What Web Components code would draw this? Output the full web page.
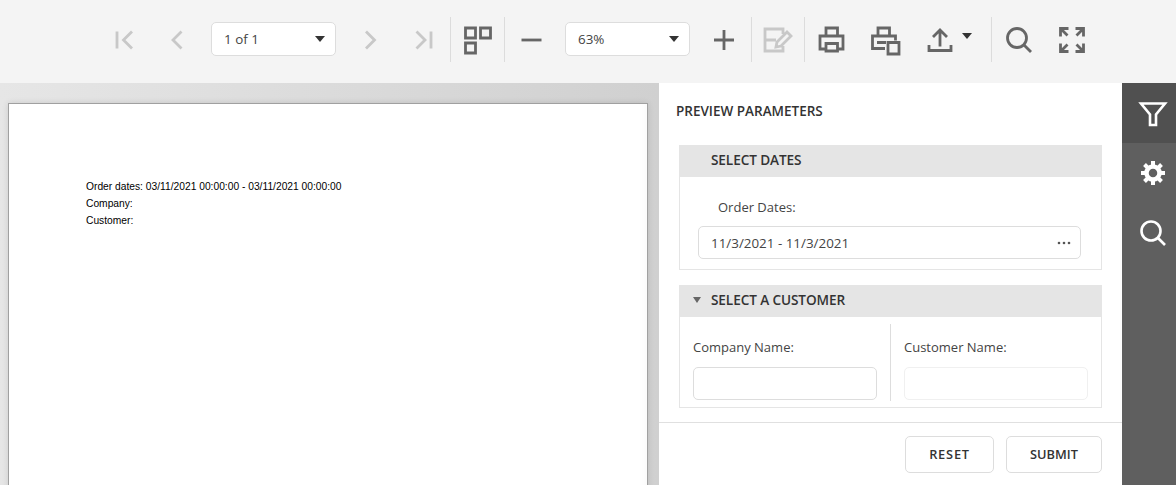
<!DOCTYPE html>
<html>
<head>
<meta charset="utf-8">
<title>Report preview</title>
<style>
  html, body { margin: 0; height: 100%; overflow: hidden; }
  body { font-family: "Open Sans", "Liberation Sans", sans-serif; color: #333; }
</style>
</head>
<body>
<report-viewer>
  <viewer-toolbar slot="toolbar"></viewer-toolbar>
  <report-page slot="page">
    <div>Order dates: 03/11/2021 00:00:00 - 03/11/2021 00:00:00</div>
    <div>Company:</div>
    <div>Customer:</div>
  </report-page>
  <params-panel slot="panel"></params-panel>
  <side-tabs slot="tabs"></side-tabs>
</report-viewer>

<script>
// shared icon paths, all on a 32 box
const ICONS = {
  first: '<path d="M9 7.500v17M24 7.500 15.500 16l8.500 8.500"/>',
  prev: '<path d="M20.500 7.500 12 16l8.500 8.500"/>',
  next: '<path d="M12 7.500 20.500 16 12 24.500"/>',
  last: '<path d="M8.500 7.500 17 16l-8.500 8.500M23 7.500v17"/>',
  multi: '<path d="M3.500 4h10v10h-10zM18.500 4h10v10h-10zM3.500 19h10v10h-10z"/>',
  minus: '<path d="M5.500 16h20"/>',
  plus: '<path d="M6 16h20M16 6v20"/>',
  edit: '<path d="M21 10V5H3v11h11M3 16v11h18v-5M15 18 25 8l4 4-10 10-5 1z"/>',
  print: '<path d="M10 11.500V4h11.500v7.500M9.500 25H4V12h23v13h-5.500M10 19.500h11.500v7.500H10z"/>',
  printPage: '<path d="M9 12V4h11.500v8M16 24.500H3.500V12h23v4.500M8 18.500h9M19 18.500h11v11.500H19z"/>',
  upload: '<path d="M16 22.500V6M9 13l7-7 7 7M5 21v5.500h22V21"/>',
  search: '<circle cx="14" cy="14" r="9.500"/><path d="M20.500 20.500 28 28"/>',
  full: '<path d="M4.500 12.500v-8h8M4.500 4.500l7 7M19.500 4.500h8v8M27.500 4.500l-7 7M4.500 19.500v8h8M4.500 27.500l7-7M27.500 19.500v8h-8M27.500 27.500l-7-7"/>',
  filter: '<path d="M4 6.500h24L19 17.500V28h-6V17.500z"/>',
  gear: '<circle cx="16" cy="16" r="6.500" stroke-width="4.500"/><path stroke-width="4" d="M16 4v4M16 24v4M4 16h4M24 16h4M7.500 7.500l3 3M21.500 21.500l3 3M24.500 7.500l-3 3M10.500 21.500l-3 3"/>'
};

const iconTemplate = document.createElement('template');
iconTemplate.innerHTML = `
  <style>
    :host { display: flex; align-items: center; justify-content: center; width: 53px; height: 54px; flex: none; }
    svg { width: 32px; height: 32px; fill: none; stroke: currentColor; stroke-width: 2.8; }
    :host([disabled]) { color: #c8c8c8; }
    :host(:not([disabled])) { color: #666; }
  </style>
  <svg viewBox="0 0 32 32"></svg>
`;

class ToolIcon extends HTMLElement {
  constructor() {
    super();
    this.attachShadow({ mode: 'open' });
    this.shadowRoot.appendChild(iconTemplate.content.cloneNode(true));
    this.shadowRoot.querySelector('svg').innerHTML = ICONS[this.getAttribute('name')];
  }
}
customElements.define('tool-icon', ToolIcon);

const comboTemplate = document.createElement('template');
comboTemplate.innerHTML = `
  <style>
    :host { display: flex; align-items: center; justify-content: space-between; box-sizing: border-box; width: 125px; height: 34px; padding: 0 10px 0 12px; background: #fff; border: 1px solid #ddd; border-radius: 5px; font-size: 13.4px; color: #444; flex: none; }
    i { width: 0; height: 0; border: 5px solid transparent; border-top: 6px solid #333; border-bottom: 0; }
  </style>
  <span><slot></slot></span><i></i>
`;

class ToolCombo extends HTMLElement {
  constructor() {
    super();
    this.attachShadow({ mode: 'open' });
    this.shadowRoot.appendChild(comboTemplate.content.cloneNode(true));
  }
}
customElements.define('tool-combo', ToolCombo);

const toolbarTemplate = document.createElement('template');
toolbarTemplate.innerHTML = `
  <style>
    :host { display: flex; align-items: flex-start; height: 83px; box-sizing: border-box; padding: 13px 0 0 97px; background: #f4f4f4; font-family: "Open Sans", "Liberation Sans", sans-serif; }
    .sep { width: 1px; height: 45px; margin-top: 4px; background: #dcdcdc; flex: none; }
    .wide { width: 54px; }
    .export { width: 79px; padding-left: 1px; box-sizing: border-box; position: relative; flex: none; }
    .caret { position: absolute; left: 50px; top: 20px; width: 0; height: 0; border: 5px solid transparent; border-top: 6px solid #333; border-bottom: 0; }
    tool-combo { margin: 9px 7px 0; }
  </style>
  <tool-icon name="first" disabled></tool-icon>
  <tool-icon name="prev" disabled></tool-icon>
  <tool-combo style="margin-left:8px">1 of 1</tool-combo>
  <tool-icon class="wide" name="next" disabled></tool-icon>
  <tool-icon name="last" disabled></tool-icon>
  <div class="sep"></div>
  <tool-icon name="multi"></tool-icon>
  <div class="sep"></div>
  <tool-icon name="minus"></tool-icon>
  <tool-combo>63%</tool-combo>
  <tool-icon class="wide" name="plus"></tool-icon>
  <div class="sep"></div>
  <tool-icon style="width:52px" name="edit" disabled></tool-icon>
  <div class="sep"></div>
  <tool-icon name="print"></tool-icon>
  <tool-icon class="wide" name="printPage"></tool-icon>
  <div class="export"><tool-icon class="wide" name="upload"></tool-icon><div class="caret"></div></div>
  <div class="sep"></div>
  <tool-icon name="search"></tool-icon>
  <tool-icon class="wide" name="full"></tool-icon>
`;

class ViewerToolbar extends HTMLElement {
  constructor() {
    super();
    this.attachShadow({ mode: 'open' });
    this.shadowRoot.appendChild(toolbarTemplate.content.cloneNode(true));
  }
}
customElements.define('viewer-toolbar', ViewerToolbar);

const pageTemplate = document.createElement('template');
pageTemplate.innerHTML = `
  <style>
    :host { display: block; box-sizing: border-box; width: 640px; height: 520px; margin: 20px 0 0 8px; padding: 74px 0 0 77px; background: #fff; border: 1px solid #a0a0a0; box-shadow: 0 0 6px rgba(0,0,0,.12), inset -12px 0 12px -12px rgba(0,0,0,.04); font-family: "Liberation Sans", sans-serif; font-size: 10.25px; line-height: 17px; color: #000; }
  </style>
  <slot></slot>
`;

class ReportPage extends HTMLElement {
  constructor() {
    super();
    this.attachShadow({ mode: 'open' });
    this.shadowRoot.appendChild(pageTemplate.content.cloneNode(true));
  }
}
customElements.define('report-page', ReportPage);

const sectionTemplate = document.createElement('template');
sectionTemplate.innerHTML = `
  <style>
    :host { display: block; width: 423px; margin-left: 20px; box-sizing: border-box; border: 1px solid #e5e5e5; border-top: 0; }
    header { display: flex; align-items: center; height: 32px; box-sizing: border-box; margin: 0 -1px; padding: 0 0 3px 32px; background: #e5e5e5; font-size: 13.6px; font-weight: 600; letter-spacing: -.1px; color: #333; position: relative; }
    :host([open]) header::before { content: ""; position: absolute; left: 14px; top: 12px; width: 0; height: 0; border: 4px solid transparent; border-top: 6px solid #666; border-bottom: 0; }
  </style>
  <header><slot name="title"></slot></header>
  <slot></slot>
`;

class ParamSection extends HTMLElement {
  constructor() {
    super();
    this.attachShadow({ mode: 'open' });
    this.shadowRoot.appendChild(sectionTemplate.content.cloneNode(true));
  }
}
customElements.define('param-section', ParamSection);

const panelTemplate = document.createElement('template');
panelTemplate.innerHTML = `
  <style>
    :host { display: flex; flex-direction: column; height: 100%; box-sizing: border-box; background: #fff; font-family: "Open Sans", "Liberation Sans", sans-serif; font-size: 13.4px; color: #444; }
    h2 { margin: 0; padding: 20px 0 0 17px; height: 62px; box-sizing: border-box; font-size: 13.5px; line-height: 17px; font-weight: 600; color: #333; }
    .dates { height: 92px; box-sizing: border-box; padding: 22px 20px 0 18px; }
    label { font-size: 13px; }
    .dates label { display: block; margin-left: 20px; line-height: 17px; }
    .field { display: flex; align-items: center; justify-content: space-between; box-sizing: border-box; height: 33px; margin-top: 10px; padding: 0 9px 0 12px; border: 1px solid #ddd; border-radius: 5px; }
    .dots { display: block; width: 14px; height: 4px; fill: #555; }
    .customer { display: grid; grid-template-columns: 210px 1fr; height: 90px; box-sizing: border-box; padding: 7px 0 6px; }
    .cell { padding: 15px 13px 0; box-sizing: border-box; }
    .cell + .cell { border-left: 1px solid #ddd; }
    .cell label { display: block; line-height: 17px; }
    .box { box-sizing: border-box; height: 33px; margin-top: 11px; border: 1px solid #ddd; border-radius: 5px; }
    .box.off { border-color: #f0f0f0; }
    footer { flex: none; display: flex; justify-content: flex-end; gap: 12px; margin-top: 14px; padding: 13px 20px 0 0; border-top: 1px solid #e0e0e0; }
    button { box-sizing: border-box; height: 37px; padding: 0 0 2px; background: #fff; border: 1px solid #ddd; border-radius: 5px; font: 600 12.8px "Open Sans", "Liberation Sans", sans-serif; color: #333; }
    .reset { width: 89px; letter-spacing: .8px; }
    .submit { width: 96px; }
    .second { margin-top: 15px; }
  </style>
  <h2>PREVIEW PARAMETERS</h2>
  <param-section>
    <span slot="title">SELECT DATES</span>
    <div class="dates">
      <label>Order Dates:</label>
      <div class="field"><span>11/3/2021 - 11/3/2021</span>
        <svg class="dots" viewBox="0 0 14 4"><circle cx="2" cy="2" r="1.300"/><circle cx="7" cy="2" r="1.300"/><circle cx="12" cy="2" r="1.300"/></svg>
      </div>
    </div>
  </param-section>
  <param-section class="second" open>
    <span slot="title">SELECT A CUSTOMER</span>
    <div class="customer">
      <div class="cell"><label>Company Name:</label><div class="box"></div></div>
      <div class="cell"><label>Customer Name:</label><div class="box off"></div></div>
    </div>
  </param-section>
  <footer><button class="reset">RESET</button><button class="submit">SUBMIT</button></footer>
`;

class ParamsPanel extends HTMLElement {
  constructor() {
    super();
    this.attachShadow({ mode: 'open' });
    this.shadowRoot.appendChild(panelTemplate.content.cloneNode(true));
  }
}
customElements.define('params-panel', ParamsPanel);

const tabsTemplate = document.createElement('template');
tabsTemplate.innerHTML = `
  <style>
    :host { display: block; height: 100%; background: #5f5f5f; color: #fff; }
    div { display: flex; align-items: center; justify-content: center; height: 60px; box-sizing: border-box; padding-left: 8px; }
    .active { background: #505050; }
    svg { width: 32px; height: 32px; fill: none; stroke: #fff; stroke-width: 2.6; }
  </style>
  <div class="active"><svg viewBox="0 0 32 32">${ICONS.filter}</svg></div>
  <div><svg viewBox="0 0 32 32">${ICONS.gear}</svg></div>
  <div><svg viewBox="0 0 32 32">${ICONS.search}</svg></div>
`;

class SideTabs extends HTMLElement {
  constructor() {
    super();
    this.attachShadow({ mode: 'open' });
    this.shadowRoot.appendChild(tabsTemplate.content.cloneNode(true));
  }
}
customElements.define('side-tabs', SideTabs);

const viewerTemplate = document.createElement('template');
viewerTemplate.innerHTML = `
  <style>
    :host { display: grid; grid-template-columns: 659px 463px 54px; grid-template-rows: 83px 402px; width: 1176px; height: 485px; overflow: hidden; }
    .top { grid-column: 1 / -1; }
    .canvas { overflow: hidden; background: linear-gradient(90deg, #e6e6e6, #d0d0d0); }
  </style>
  <div class="top"><slot name="toolbar"></slot></div>
  <div class="canvas"><slot name="page"></slot></div>
  <div><slot name="panel"></slot></div>
  <div><slot name="tabs"></slot></div>
`;

class ReportViewer extends HTMLElement {
  constructor() {
    super();
    this.attachShadow({ mode: 'open' });
    this.shadowRoot.appendChild(viewerTemplate.content.cloneNode(true));
  }
}
customElements.define('report-viewer', ReportViewer);
</script>
</body>
</html>
